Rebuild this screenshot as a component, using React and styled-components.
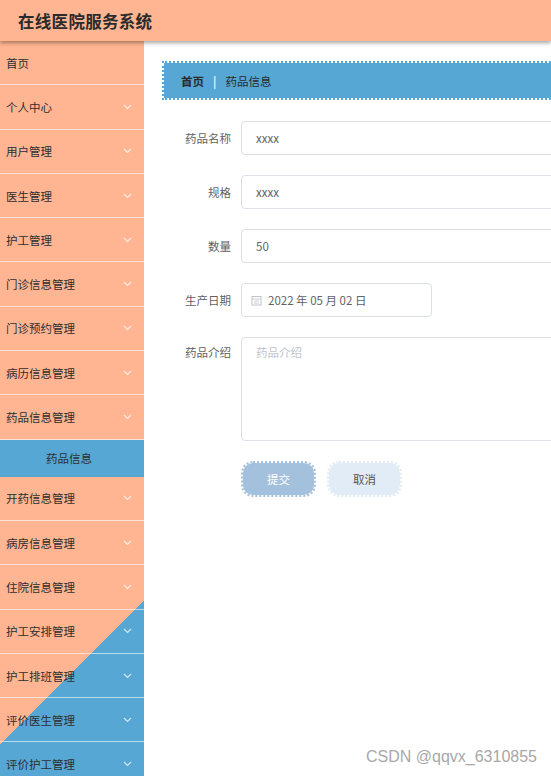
import React from 'react'
import styled, { createGlobalStyle } from 'styled-components'

const GlobalStyle = createGlobalStyle`
  html, body {
    margin: 0;
    padding: 0;
    overflow: hidden;
    background: #fff;
    font-family: "Noto Sans CJK SC", "Noto Sans", sans-serif;
  }
`;

const Page = styled.div`
  width: 551px;
  height: 776px;
  overflow: hidden;
  position: relative;
`;

const Header = styled.header`
  height: 41px;
  background: #ffb592;
  display: flex;
  align-items: center;
  padding-left: 18px;
  box-shadow: 0 2px 4px rgba(0, 0, 0, 0.35);
  position: relative;
  z-index: 2;
`;

const Title = styled.h1`
  margin: 0;
  font-size: 16.5px;
  font-weight: 700;
  color: #2b2b2b;
  letter-spacing: 0.3px;
`;

const Body = styled.div`
  display: flex;
`;

const Aside = styled.aside`
  width: 144px;
  flex-shrink: 0;
  height: 760px;
  background: linear-gradient(135deg, #ffb592 77.8%, #56a7d4 77.8%);
`;

const MenuItem = styled.div`
  height: ${p => (p.$sub ? 37 : 43.3)}px;
  display: flex;
  align-items: center;
  justify-content: ${p => (p.$sub ? 'center' : 'space-between')};
  padding: 0 12px 0 6px;
  font-size: 11.5px;
  color: #2e2e2e;
  background: ${p => (p.$sub ? '#56a7d4' : 'transparent')};
  border-bottom: ${p => (p.$sub ? 'none' : '1px solid rgba(255, 255, 255, 0.6)')};
`;

const Chevron = () => (
  <svg width="9" height="6" viewBox="0 0 9 6">
    <path d="M1 1l3.5 3.5L8 1" fill="none" stroke="rgba(255,255,255,0.75)" strokeWidth="1.1" />
  </svg>
);

const Main = styled.main`
  flex: 1;
  padding: 20px 0 0 18px;
`;

const Breadcrumb = styled.div`
  height: 35px;
  width: 420px;
  display: flex;
  align-items: center;
  padding-left: 17px;
  background: #56a7d4;
  background-clip: padding-box;
  border: 2px dotted #56a7d4;
  font-size: 11.5px;
  color: #2a2a2a;
`;

const Crumb = styled.span`
  font-weight: ${p => (p.$bold ? 700 : 400)};
`;

const Sep = styled.span`
  margin: 0 9px;
  color: #e8f2f9;
  font-weight: 700;
`;

const Form = styled.div`
  padding-top: 21px;
  display: flex;
  flex-direction: column;
  gap: 20px;
`;

const Row = styled.div`
  display: flex;
  align-items: ${p => (p.$top ? 'flex-start' : 'center')};
`;

const Label = styled.label`
  width: 69px;
  margin-right: 10px;
  text-align: right;
  font-size: 11.5px;
  color: #606266;
  padding-top: ${p => (p.$top ? '7px' : '0')};
`;

const Input = styled.div`
  height: 32px;
  width: ${p => p.$w || 340}px;
  border: 1px solid #dcdfe6;
  border-radius: 4px;
  display: flex;
  align-items: center;
  padding-left: ${p => p.$pad || 14}px;
  font-size: 11.5px;
  color: #606266;
  gap: 6px;
`;

const TextArea = styled.div`
  height: 90px;
  width: 340px;
  border: 1px solid #dcdfe6;
  border-radius: 4px;
  padding: 6px 14px;
  font-size: 11.5px;
  color: #c0c4cc;
`;

const Buttons = styled.div`
  display: flex;
  gap: 11px;
  margin-left: 79px;
`;

const Button = styled.div`
  width: 71px;
  height: 32px;
  display: flex;
  align-items: center;
  justify-content: center;
  border-radius: 12px;
  font-size: 11.5px;
  background: ${p => (p.$primary ? '#a3c0dc' : '#e2ecf6')};
  background-clip: padding-box;
  border: 2px dotted ${p => (p.$primary ? '#a3c0dc' : '#e2ecf6')};
  color: ${p => (p.$primary ? '#fff' : '#555')};
`;

const Watermark = styled.div`
  position: absolute;
  right: 14px;
  bottom: 10px;
  font-family: "Liberation Sans", Arial, sans-serif;
  font-size: 16px;
  color: #a8a8a8;
`;

const CalendarIcon = () => (
  <svg width="11" height="11" viewBox="0 0 11 11">
    <rect x="1" y="1.5" width="9" height="8.5" fill="none" stroke="#c0c4cc" strokeWidth="1" />
    <path d="M1 4h9M3 6h5M3 8h5" stroke="#c0c4cc" strokeWidth="0.8" />
  </svg>
);

const menu = [
  { name: '首页', arrow: false },
  { name: '个人中心' },
  { name: '用户管理' },
  { name: '医生管理' },
  { name: '护工管理' },
  { name: '门诊信息管理' },
  { name: '门诊预约管理' },
  { name: '病历信息管理' },
  { name: '药品信息管理' },
  { name: '药品信息', sub: true },
  { name: '开药信息管理' },
  { name: '病房信息管理' },
  { name: '住院信息管理' },
  { name: '护工安排管理' },
  { name: '护工排班管理' },
  { name: '评价医生管理' },
  { name: '评价护工管理' },
];

const App = () => {
  return (
    <Page>
      <GlobalStyle />
      <Header>
        <Title>在线医院服务系统</Title>
      </Header>
      <Body>
        <Aside>
          {menu.map(m => (
            <MenuItem key={m.name} $sub={m.sub}>
              <span>{m.name}</span>
              {!m.sub && m.arrow !== false && <Chevron />}
            </MenuItem>
          ))}
        </Aside>
        <Main>
          <Breadcrumb>
            <Crumb $bold>首页</Crumb>
            <Sep>|</Sep>
            <Crumb>药品信息</Crumb>
          </Breadcrumb>
          <Form>
            <Row>
              <Label>药品名称</Label>
              <Input>xxxx</Input>
            </Row>
            <Row>
              <Label>规格</Label>
              <Input>xxxx</Input>
            </Row>
            <Row>
              <Label>数量</Label>
              <Input>50</Input>
            </Row>
            <Row>
              <Label>生产日期</Label>
              <Input $w={180} $pad={9}>
                <CalendarIcon />
                2022 年 05 月 02 日
              </Input>
            </Row>
            <Row $top>
              <Label $top>药品介绍</Label>
              <TextArea>药品介绍</TextArea>
            </Row>
            <Buttons>
              <Button $primary>提交</Button>
              <Button>取消</Button>
            </Buttons>
          </Form>
        </Main>
      </Body>
      <Watermark>CSDN @qqvx_6310855</Watermark>
    </Page>
  )
}

export default App
